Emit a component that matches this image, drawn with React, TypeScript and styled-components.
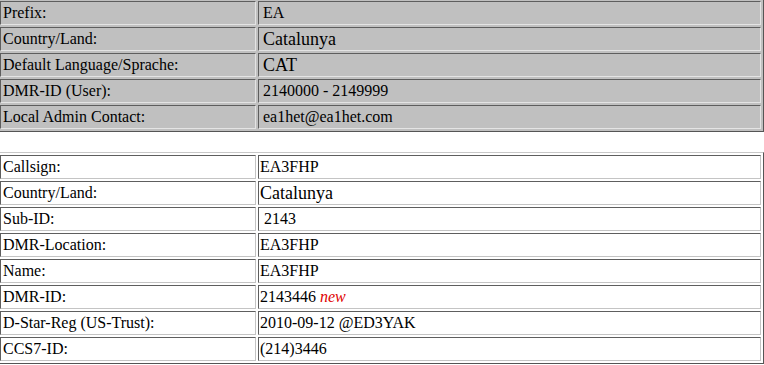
import React from 'react';
import styled, { createGlobalStyle } from 'styled-components';

const GlobalStyle = createGlobalStyle`
  html, body {
    margin: 0;
    padding: 0;
    background: #ffffff;
    overflow: hidden;
  }
`;

const Page = styled.div`
  margin: -2px 0 0 -3px;
  display: flex;
  flex-direction: column;
  gap: 20px;
`;

const InfoTable = styled.table<{ $shaded?: boolean }>`
  width: 767px;
  table-layout: fixed;
  border-collapse: separate;
  border-spacing: 2px;
  border: 1px solid;
  border-color: ${(p) => (p.$shaded ? '#e4e4e4' : '#c8c8c8')} #555555 #555555
    ${(p) => (p.$shaded ? '#e4e4e4' : '#c8c8c8')};
  background: ${(p) => (p.$shaded ? '#c0c0c0' : '#ffffff')};
  font-family: "Liberation Serif", "Times New Roman", serif;
  font-size: 16px;
  color: #000;
`;

const Cell = styled.td<{ $shaded?: boolean }>`
  height: 22px;
  padding: 0 1px;
  border: 1px solid;
  border-color: #5e5e5e ${(p) => (p.$shaded ? '#e4e4e4' : '#c4c4c4')}
    ${(p) => (p.$shaded ? '#e4e4e4' : '#c4c4c4')} #5e5e5e;
  vertical-align: middle;
  white-space: nowrap;
  line-height: 20px;
`;

const Label = styled(Cell)`
  width: 251px;
  padding-left: 2px;
`;

const Value = styled(Cell)<{ $big?: boolean }>`
  padding-left: ${(p) => (p.$shaded ? '4px' : '1px')};
  font-size: ${(p) => (p.$big ? '18px' : '16px')};
`;

const New = styled.i`
  color: #e00000;
`;

type Row = { label: string; value: React.ReactNode; big?: boolean };

const prefixRows: Row[] = [
  { label: 'Prefix:', value: 'EA' },
  { label: 'Country/Land:', value: 'Catalunya', big: true },
  { label: 'Default Language/Sprache:', value: 'CAT', big: true },
  { label: 'DMR-ID (User):', value: '2140000 - 2149999' },
  { label: 'Local Admin Contact:', value: 'ea1het@ea1het.com' },
];

const userRows: Row[] = [
  { label: 'Callsign:', value: 'EA3FHP' },
  { label: 'Country/Land:', value: 'Catalunya', big: true },
  { label: 'Sub-ID:', value: '\u00a02143' },
  { label: 'DMR-Location:', value: 'EA3FHP' },
  { label: 'Name:', value: 'EA3FHP' },
  { label: 'DMR-ID:', value: <>2143446 <New>new</New></> },
  { label: 'D-Star-Reg (US-Trust):', value: '2010-09-12 @ED3YAK' },
  { label: 'CCS7-ID:', value: '(214)3446' },
];

const App = () => (
  <Page>
    <GlobalStyle />
    <InfoTable $shaded>
      <tbody>
        {prefixRows.map((r) => (
          <tr key={r.label}>
            <Label $shaded>{r.label}</Label>
            <Value $shaded $big={r.big}>{r.value}</Value>
          </tr>
        ))}
      </tbody>
    </InfoTable>
    <InfoTable>
      <tbody>
        {userRows.map((r) => (
          <tr key={r.label}>
            <Label>{r.label}</Label>
            <Value $big={r.big}>{r.value}</Value>
          </tr>
        ))}
      </tbody>
    </InfoTable>
  </Page>
);
export default App;
